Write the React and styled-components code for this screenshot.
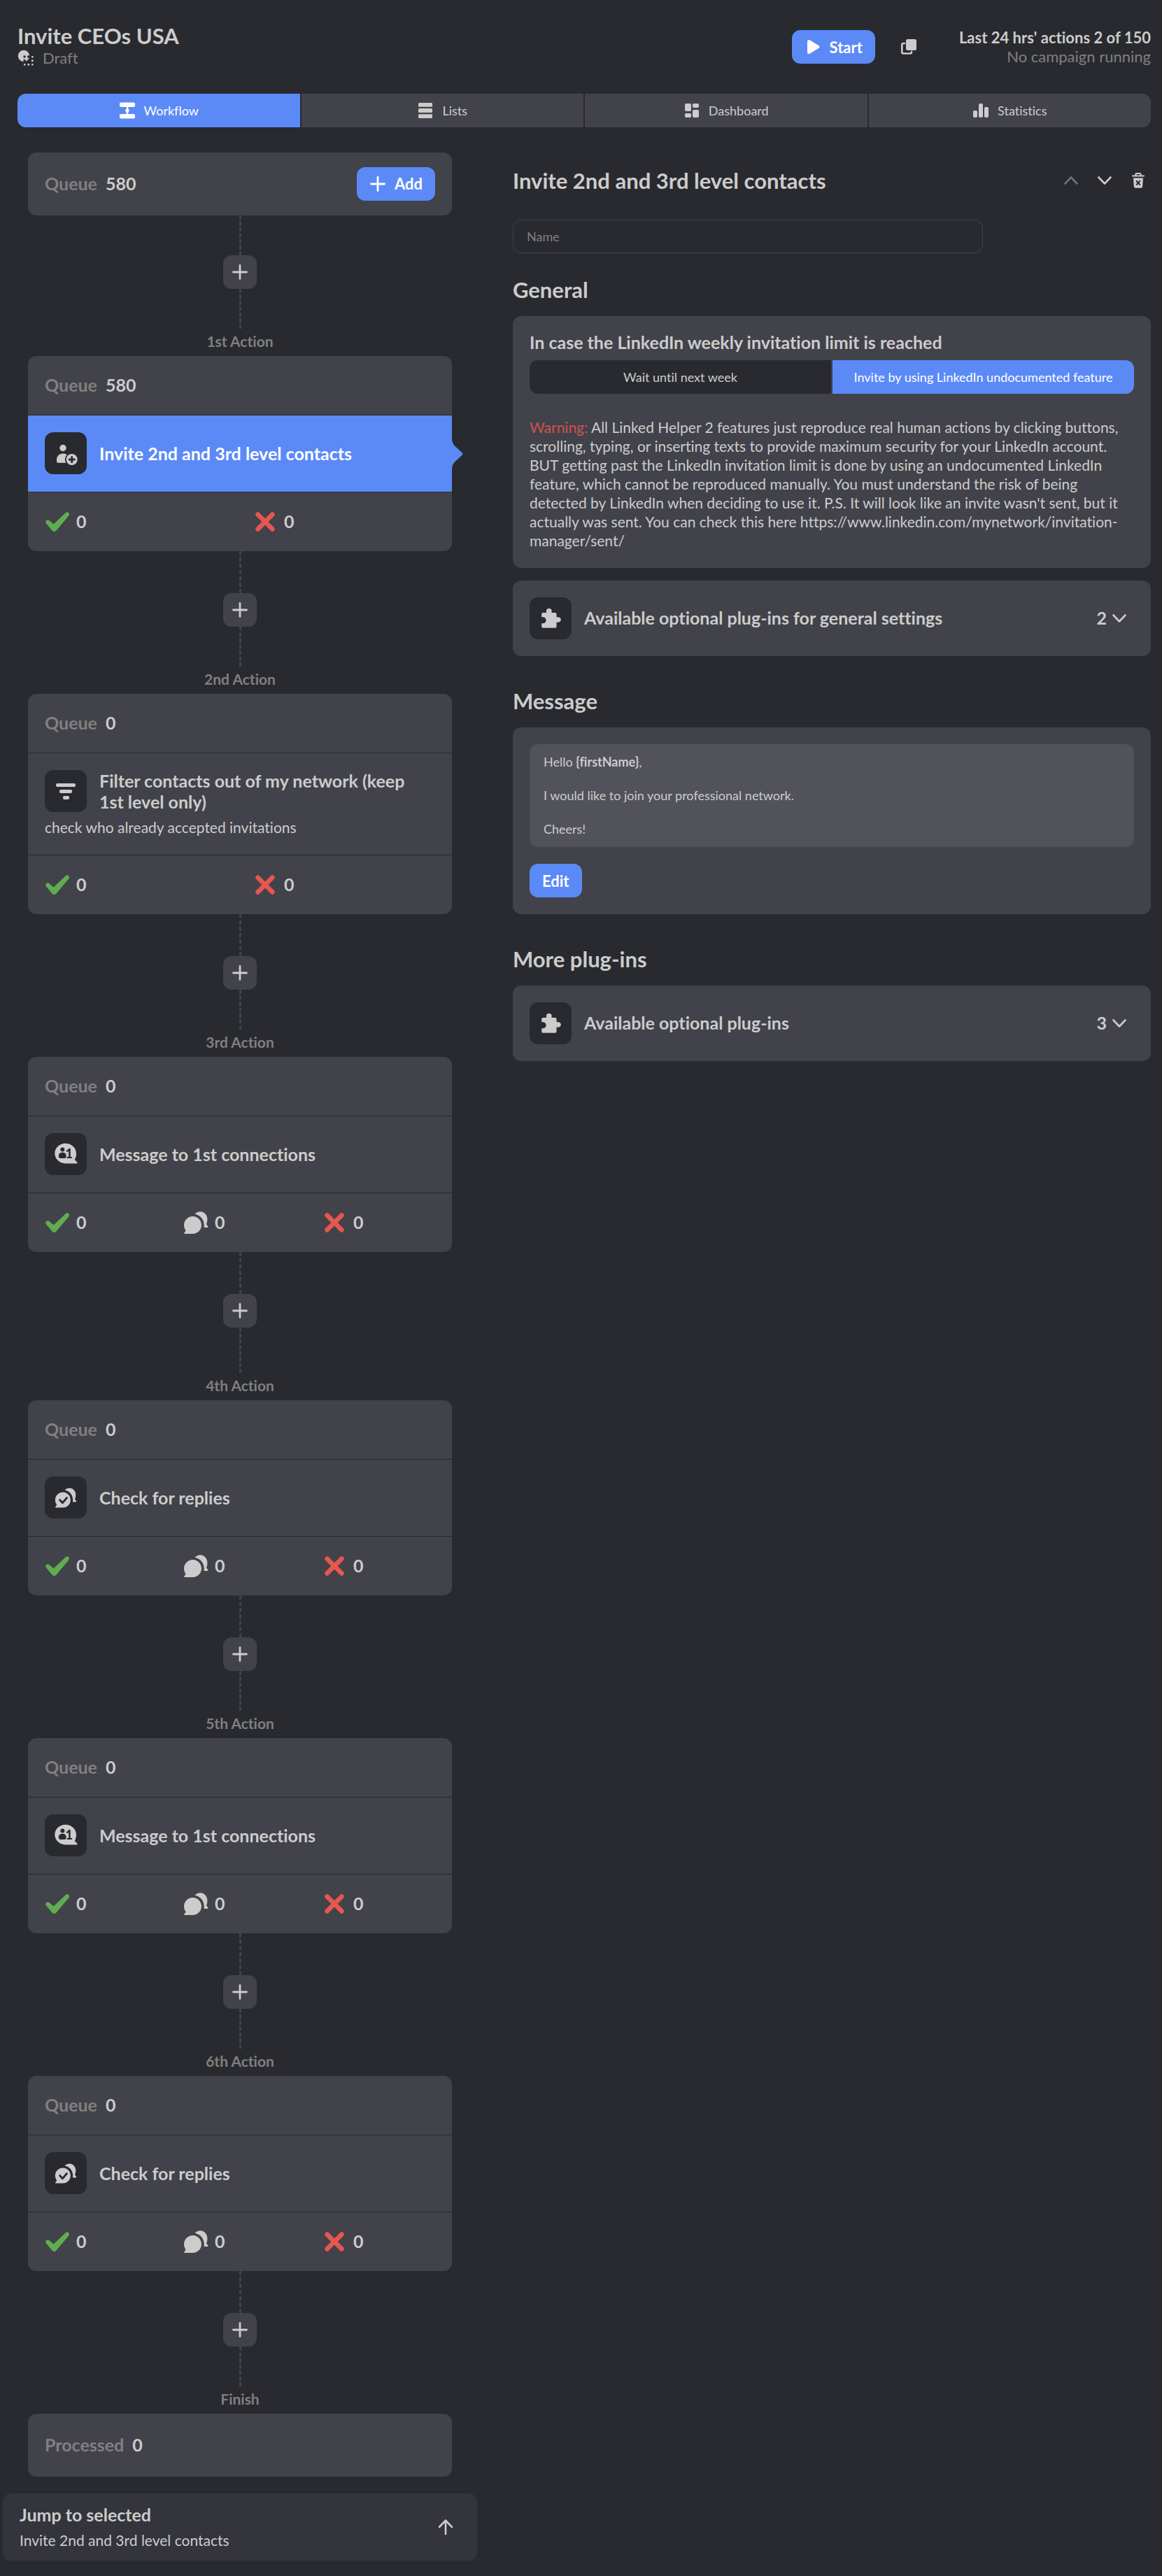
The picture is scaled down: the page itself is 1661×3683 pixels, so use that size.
import React from "react";
import styled, { createGlobalStyle, css } from "styled-components";

const color = {
  page: "#292a2f",
  card: "#42424a",
  field: "#52525b",
  jump: "#34343c",
  text: "#cccccc",
  muted: "#808080",
  accent: "#5b8af7",
  success: "#5fad50",
  danger: "#e5574f",
  warning: "#d0534e",
};

const GlobalStyle = createGlobalStyle`
  *, *::before, *::after { box-sizing: border-box; }
  body {
    margin: 0;
    background: ${color.page};
    color: ${color.text};
    font-family: Lato, "Liberation Sans", sans-serif;
    font-size: 21px;
    font-variant-ligatures: no-common-ligatures;
  }
  button, input { font: inherit; font-variant-ligatures: inherit; color: inherit; }
  h1, h2, h3, p { margin: 0; font-weight: inherit; font-size: inherit; }
  svg { display: block; flex: none; }
`;

const resetButton = css`
  border: 0;
  padding: 0;
  background: none;
  cursor: pointer;
`;

/* ---------- icons ---------- */

const Svg = ({ size = 24, box = size, children }) => (
  <svg width={size} height={size} viewBox={`0 0 ${box} ${box}`} fill="currentColor" aria-hidden="true">
    {children}
  </svg>
);

const strokeProps = { fill: "none", stroke: "currentColor", strokeLinecap: "round", strokeLinejoin: "round" };

const PlusIcon = () => (
  <Svg><path d="M12 2.5v19M2.5 12h19" {...strokeProps} strokeWidth="2.8" /></Svg>
);
const ChevronDown = () => (
  <Svg><path d="M3.5 7.5L12 16.5l8.5-9" {...strokeProps} strokeWidth="2.6" /></Svg>
);
const ChevronUp = () => (
  <Svg><path d="M3.5 16.5L12 7.5l8.5 9" {...strokeProps} strokeWidth="2.6" /></Svg>
);
const ArrowUp = () => (
  <Svg><path d="M12 22V3M3 12l9-9.5 9 9.5" {...strokeProps} strokeWidth="2.6" /></Svg>
);
const PlayIcon = () => (
  <Svg><path d="M4 4.2C4 2.3 5.8 1.3 7.4 2.3L20.5 10.3C21.8 11.2 21.8 12.8 20.5 13.7L7.4 21.7C5.8 22.7 4 21.7 4 19.8Z" /></Svg>
);
const CopyIcon = () => (
  <Svg>
    <rect x="8" y="1" width="15" height="16" rx="2.5" />
    <path d="M6 7H4.2Q2.3 7 2.3 9v10.500q0 2 2 2H14q2 0 2-2V19" {...strokeProps} strokeWidth="2.6" />
  </Svg>
);
const TrashIcon = () => (
  <Svg>
    <path d="M8.5 5V3.200q0-1.200 1.200-1.200h4.600q1.200 0 1.200 1.200V5M4 5.500h16" {...strokeProps} strokeWidth="2.2" />
    <path fillRule="evenodd" d="M5 8.500h14l-.9 12.300q-.2 2-2.200 2H8.100q-2 0-2.200-2ZM9.900 11.500l-1.400 1.400 2.100 2.500-2.100 2.600 1.400 1.300 2.100-2.400 2.100 2.400 1.400-1.300-2.100-2.600 2.100-2.500-1.400-1.400-2.100 2.400Z" />
  </Svg>
);
const WorkflowIcon = () => (
  <Svg>
    <rect x="1" y="0.5" width="22" height="6.5" rx="2" />
    <rect x="1" y="17" width="22" height="6.5" rx="2" />
    <path d="M10.800 6h2.400v3.300L15 12l-1.800 2.700V18h-2.400v-3.300L9 12l1.800-2.700Z" />
  </Svg>
);
const ListsIcon = () => (
  <Svg>
    <rect x="2" y="1" width="20" height="5.8" rx="1.5" />
    <rect x="2" y="9.1" width="20" height="5.8" rx="1.5" />
    <rect x="2" y="17.2" width="20" height="5.8" rx="1.5" />
  </Svg>
);
const DashboardIcon = () => (
  <Svg>
    <rect x="2" y="2" width="9" height="11" rx="2" />
    <rect x="13" y="2" width="9" height="6" rx="2" />
    <rect x="2" y="16" width="9" height="6" rx="2" />
    <rect x="13" y="11" width="9" height="11" rx="2" />
  </Svg>
);
const StatisticsIcon = () => (
  <Svg>
    <rect x="1" y="12" width="6" height="10" rx="2" />
    <rect x="9" y="2" width="6" height="20" rx="2" />
    <rect x="17" y="7" width="6" height="15" rx="2" />
  </Svg>
);
const DraftIcon = () => (
  <Svg>
    <circle cx="9" cy="9" r="8.2" />
    <g fill={color.page}>
      <rect x="8.5" y="8.5" width="3" height="3" />
      <rect x="14" y="8.5" width="3.5" height="3" />
      <rect x="8.5" y="14" width="3" height="3.5" />
    </g>
    <rect x="20" y="9" width="2.6" height="2.6" rx=".8" />
    <rect x="20" y="14.5" width="2.6" height="2.6" />
    <rect x="20" y="20" width="2.6" height="2.6" rx=".8" />
    <rect x="14.5" y="20" width="2.6" height="2.6" />
    <rect x="9" y="20" width="2.6" height="2.6" rx=".8" />
  </Svg>
);
const CheckIcon = () => (
  <Svg size={36}>
    <path fill={color.success} d="M2 16.500Q4.200 14.200 6.500 16.300L12.600 21.500 30 5Q32.200 3.300 34 5 36 7 34.400 9.300L16.300 30.700Q13.500 33.500 10.600 30.700L1.700 20Q.3 18.200 2 16.500Z" />
  </Svg>
);
const CrossIcon = () => (
  <Svg size={36}>
    <path d="M7.600 7.600L28.400 28.400M28.400 7.600L7.600 28.400" fill="none" stroke={color.danger} strokeWidth="6.6" strokeLinecap="round" />
  </Svg>
);
const chatFront = "M13.600 9C20.500 9 26 14.600 26 21.500S20.500 34 13.600 34H2Q.4 34 1.400 32.600L3.600 29.500C2 27.200 1 24.500 1 21.500 1 14.600 6.700 9 13.600 9Z";
const chatBack = "M16.500 5.800C21 .500 30 1.200 33.300 8.200 35 12 34.700 16.500 33 20.300L35.200 23.300Q35.700 24.800 34.500 24.900H29.600C31 15.500 25.500 7.500 16.500 5.800Z";
const ChatsIcon = () => (
  <Svg size={36}><path d={chatFront} /><path d={chatBack} /></Svg>
);

const InviteIcon = () => (
  <Svg size={60}>
    <circle cx="26" cy="22.5" r="4.7" />
    <path d="M17 40C17 34 20.500 30.500 26 30.500 28.300 30.500 30.200 31 31.700 32.200 28.800 35 28 40 30.300 43.800H19.200Q17 43.800 17 41.500Z" />
    <circle cx="38.7" cy="39" r="8" />
    <path d="M38.700 34.300v9.400M34 39h9.400" stroke={color.page} strokeWidth="2.8" />
  </Svg>
);
const FilterIcon = () => (
  <Svg size={60}>
    <rect x="16" y="19" width="28" height="5" rx="2" />
    <rect x="21" y="28" width="18" height="5" rx="2" />
    <rect x="26" y="37" width="9" height="5" rx="2" />
  </Svg>
);
const Digit = styled.text`
  font-family: Lato, sans-serif;
  font-weight: 900;
  font-size: 18px;
`;
const MessageIcon = () => (
  <Svg size={60}>
    <path d="M29.500 14.700C38 14.700 45 21 45 29.200 45 32.500 44.200 35.500 42.700 38L46.600 42Q47 43.300 45.800 43.400H29.500C21 43.400 14.300 37 14.300 29.100S21 14.700 29.500 14.700Z" />
    <g fill={color.page}>
      <circle cx="25.3" cy="23.6" r="3" />
      <path d="M19.800 33C19.800 29.500 22 27.700 25.300 27.700S30.700 29.500 30.700 33Q30.700 36 28 36H22.500Q19.800 36 19.800 33Z" />
      <Digit x="29.5" y="36">1</Digit>
    </g>
  </Svg>
);
const RepliesIcon = () => (
  <Svg size={60}>
    <g transform="translate(14 14.5) scale(.88)"><path d={chatFront} /><path d={chatBack} /></g>
    <path d="M21.500 33.500l4 4.200 6-7.200" {...strokeProps} stroke={color.page} strokeWidth="2.8" />
  </Svg>
);
const PuzzleIcon = () => (
  <Svg size={60}>
    <path d="M19 22H24.200C23.200 17.500 25 16 27.800 16S32.400 17.500 31.400 22H36.500Q38.500 22 38.500 24V28.300C42.500 27.600 44.800 29.500 44.800 32S42.500 36.400 38.500 35.700V41.700Q38.500 43.700 36.500 43.700H19.200Q17.200 43.700 17.200 41.700V37.300C21.500 37.800 23.600 35.500 23.600 32.800S21.500 27.900 17.200 28.400V24Q17.200 22 19 22Z" />
  </Svg>
);

/* ---------- shared parts ---------- */

const PrimaryButton = styled.button`
  ${resetButton}
  display: inline-flex;
  align-items: center;
  gap: 12px;
  height: 48px;
  padding: 0 18px;
  border-radius: 12px;
  background: ${color.accent};
  color: #fff;
  font-size: 22px;
  font-weight: 700;
`;

const IconButton = styled.button`
  ${resetButton}
  display: inline-flex;
  align-items: center;
  justify-content: center;
  width: ${(p) => p.$size || 24}px;
  height: ${(p) => p.$size || 24}px;
  border-radius: 12px;
  background: ${(p) => (p.$filled ? color.card : "transparent")};
  opacity: ${(p) => (p.disabled ? 0.45 : 1)};
`;

const IconTile = styled.span`
  display: block;
  flex: none;
  width: 60px;
  height: 60px;
  border-radius: 12px;
  background: ${color.page};
  color: ${color.text};
`;

/* ---------- header ---------- */

const Page = styled.div`
  display: flex;
  flex-direction: column;
  padding-bottom: 22px;
`;

const Header = styled.header`
  display: flex;
  justify-content: space-between;
  align-items: flex-start;
  padding: 32px 16px 38px 25px;
`;

const CampaignTitle = styled.h1`
  && { font-size: 31px; font-weight: 700; }
  line-height: 38px;
`;

const CampaignStatus = styled.p`
  && { font-size: 22px; }
  display: flex;
  align-items: center;
  gap: 12px;
  line-height: 26px;
`;

const Muted = styled.span`
  color: ${color.muted};
`;

const HeaderActions = styled.div`
  display: flex;
  align-items: center;
  gap: 24px;
  padding-top: 8px;
`;

const Usage = styled.div`
  margin-left: 24px;
  text-align: right;
`;

const UsageLine = styled.p`
  && { font-size: 22px; font-weight: ${(p) => (p.$strong ? 700 : 400)}; }
  line-height: 27px;
  color: ${(p) => (p.$strong ? color.text : color.muted)};
`;

const Tabs = styled.nav`
  display: grid;
  grid-template-columns: repeat(4, 1fr);
  gap: 2px;
  margin: 0 16px 0 25px;
  border-radius: 12px;
  overflow: hidden;
`;

const Tab = styled.button`
  ${resetButton}
  display: flex;
  align-items: center;
  justify-content: center;
  gap: 12px;
  height: 48px;
  font-size: 18px;
  background: ${(p) => (p.$active ? color.accent : color.card)};
  color: ${(p) => (p.$active ? "#fff" : color.text)};
`;

/* ---------- workflow column ---------- */

const Main = styled.main`
  display: grid;
  grid-template-columns: minmax(0, 678px) minmax(0, 1fr);
  column-gap: 51px;
  align-items: start;
  padding: 36px 16px 0 4px;
`;

const Workflow = styled.section`
  display: flex;
  flex-direction: column;
`;

const Steps = styled.div`
  display: flex;
  flex-direction: column;
  padding: 0 36px;
`;

const Card = styled.article`
  border-radius: 12px;
  background: ${color.card};
`;

const CounterRow = styled.div`
  display: flex;
  align-items: center;
  gap: 12px;
  height: ${(p) => (p.$tall ? 90 : 84)}px;
  padding: 0 24px;
  font-size: 25px;
  font-weight: 700;
  line-height: 30px;

  button { margin-left: auto; }
`;

const Count = styled.span`
  padding-bottom: 2px;
`;

const CountLabel = styled(Count)`
  color: ${color.muted};
`;

const ActionRow = styled.div`
  position: relative;
  padding: 24px 24px 25px;
  border-top: 1px solid ${color.page};
  border-bottom: 1px solid ${color.page};
  background: ${(p) => (p.$selected ? color.accent : "transparent")};
  color: ${(p) => (p.$selected ? "#fff" : color.text)};
`;

const ActionHead = styled.div`
  display: flex;
  align-items: center;
  gap: 18px;
  padding-right: 24px;
`;

const ActionTitle = styled.h3`
  && { font-size: 25px; font-weight: 700; }
  line-height: 30px;
`;

const ActionNote = styled.p`
  && { margin-top: 8px; }
  line-height: 28px;
`;

const Pointer = styled.svg`
  position: absolute;
  left: 100%;
  top: calc(50% - 21px);
  color: ${color.accent};
`;

const Results = styled.div`
  display: grid;
  grid-auto-flow: column;
  grid-auto-columns: 1fr;
  column-gap: 36px;
  align-items: center;
  height: 84px;
  padding: 0 24px;
`;

const Result = styled.span`
  display: flex;
  align-items: center;
  gap: 9px;
  font-size: 25px;
  font-weight: 700;
  line-height: 30px;
`;

const ConnectorBox = styled.div`
  display: flex;
  flex-direction: column;
  align-items: center;
`;

const Dashes = styled.span`
  height: ${(p) => p.$length}px;
  border-left: 3px dashed ${color.card};
`;

const StepLabel = styled.p`
  && { font-size: 21px; font-weight: 700; margin: 5px 0 8px; }
  line-height: 26px;
  color: ${color.muted};
`;

const JumpButton = styled.button`
  ${resetButton}
  display: flex;
  align-items: center;
  justify-content: space-between;
  height: 96px;
  margin-top: 24px;
  padding: 0 33px 0 24px;
  border-radius: 12px;
  background: ${color.jump};
  text-align: left;
`;

const JumpText = styled.span`
  display: flex;
  flex-direction: column;
  gap: 8px;
`;

const JumpTitle = styled.strong`
  font-size: 25px;
  line-height: 30px;
`;

const JumpTarget = styled.span`
  font-size: 21px;
  line-height: 28px;
`;

/* ---------- detail column ---------- */

const Detail = styled.section`
  display: flex;
  flex-direction: column;
  padding-top: 21px;
`;

const DetailHead = styled.div`
  display: flex;
  align-items: center;
  justify-content: space-between;
  padding-right: 6px;
`;

const Heading = styled.h2`
  && { font-size: 31px; font-weight: 700; }
  line-height: 38px;
`;

const Tools = styled.div`
  display: flex;
  gap: 24px;
`;

const NameField = styled.input`
  width: 100%;
  max-width: 672px;
  height: 48px;
  margin-top: 37px;
  padding: 0 19px;
  border: 1px solid ${color.card};
  border-radius: 12px;
  background: transparent;
  font-size: 18px;

  &::placeholder { color: ${color.muted}; opacity: 1; }
`;

const Section = styled.section`
  display: flex;
  flex-direction: column;
  margin-top: ${(p) => (p.$first ? 33 : 45)}px;
`;

const Panel = styled.div`
  margin-top: 19px;
  padding: 24px 24px ${(p) => (p.$text ? 26 : 24)}px;
  border-radius: 12px;
  background: ${color.card};
`;

const PanelTitle = styled.h3`
  && { font-size: 25px; font-weight: 700; }
  line-height: 26px;
`;

const Segments = styled.div`
  display: grid;
  grid-template-columns: 1fr 1fr;
  gap: 2px;
  margin-top: 13px;
  border-radius: 12px;
  overflow: hidden;
`;

const Segment = styled.button`
  ${resetButton}
  height: 48px;
  font-size: 18px;
  background: ${(p) => (p.$active ? color.accent : color.page)};
  color: ${(p) => (p.$active ? "#fff" : color.text)};
`;

const WarningText = styled.p`
  && { margin-top: 34px; }
  line-height: 27px;
`;

const WarningMark = styled.span`
  color: ${color.warning};
`;

const PluginBar = styled.button`
  ${resetButton}
  display: flex;
  align-items: center;
  gap: 18px;
  width: 100%;
  height: 108px;
  margin-top: ${(p) => (p.$stacked ? 18 : 19)}px;
  padding: 0 33px 0 24px;
  border-radius: 12px;
  background: ${color.card};
  font-size: 25px;
  font-weight: 700;
`;

const PluginCount = styled.span`
  display: flex;
  align-items: center;
  gap: 6px;
  margin-left: auto;
`;

const MessageBox = styled.div`
  margin-bottom: 24px;
  padding: 13px 20px 14px;
  border-radius: 12px;
  background: ${color.field};
  font-size: 18px;
  line-height: 24px;
  white-space: pre-line;
`;

/* ---------- data ---------- */

const tabs = [
  ["Workflow", WorkflowIcon],
  ["Lists", ListsIcon],
  ["Dashboard", DashboardIcon],
  ["Statistics", StatisticsIcon],
];

const actions = [
  { label: "1st Action", queue: 580, icon: InviteIcon, title: "Invite 2nd and 3rd level contacts", selected: true, before: 57 },
  { label: "2nd Action", queue: 0, icon: FilterIcon, title: "Filter contacts out of my network (keep 1st level only)", note: "check who already accepted invitations" },
  { label: "3rd Action", queue: 0, icon: MessageIcon, title: "Message to 1st connections", replies: true },
  { label: "4th Action", queue: 0, icon: RepliesIcon, title: "Check for replies", replies: true, after: 65 },
  { label: "5th Action", queue: 0, icon: MessageIcon, title: "Message to 1st connections", replies: true },
  { label: "6th Action", queue: 0, icon: RepliesIcon, title: "Check for replies", replies: true },
];

function Connector({ label, before = 60, after = 57 }) {
  return (
    <ConnectorBox>
      <Dashes $length={before} />
      <IconButton $size={48} $filled aria-label="Add action"><PlusIcon /></IconButton>
      <Dashes $length={after} />
      <StepLabel>{label}</StepLabel>
    </ConnectorBox>
  );
}

function ActionCard({ queue, icon: Icon, title, note, selected, replies }) {
  return (
    <Card>
      <CounterRow><CountLabel>Queue</CountLabel><Count>{queue}</Count></CounterRow>
      <ActionRow $selected={selected}>
        <ActionHead>
          <IconTile><Icon /></IconTile>
          <ActionTitle>{title}</ActionTitle>
        </ActionHead>
        {note && <ActionNote>{note}</ActionNote>}
        {selected && (
          <Pointer width="16" height="42" viewBox="0 0 16 42" fill="currentColor" aria-hidden="true">
            <path d="M0 0Q.5 6 4.500 10L14.500 19.300Q16.500 21 14.500 22.700L4.500 32Q.5 36 0 42Z" />
          </Pointer>
        )}
      </ActionRow>
      <Results>
        <Result><CheckIcon /><Count>0</Count></Result>
        {replies && <Result><ChatsIcon /><Count>0</Count></Result>}
        <Result><CrossIcon /><Count>0</Count></Result>
      </Results>
    </Card>
  );
}

function Plugins({ title, count, stacked }) {
  return (
    <PluginBar $stacked={stacked} aria-expanded="false">
      <IconTile><PuzzleIcon /></IconTile>
      <Count>{title}</Count>
      <PluginCount><Count>{count}</Count><ChevronDown /></PluginCount>
    </PluginBar>
  );
}

export default function App() {
  return (
    <Page>
      <GlobalStyle />
      <Header>
        <div>
          <CampaignTitle>Invite CEOs USA</CampaignTitle>
          <CampaignStatus><DraftIcon /><Muted>Draft</Muted></CampaignStatus>
        </div>
        <HeaderActions>
          <PrimaryButton><PlayIcon />Start</PrimaryButton>
          <IconButton $size={48} aria-label="Copy campaign"><CopyIcon /></IconButton>
          <Usage>
            <UsageLine $strong>Last 24 hrs' actions 2 of 150</UsageLine>
            <UsageLine>No campaign running</UsageLine>
          </Usage>
        </HeaderActions>
      </Header>

      <Tabs>
        {tabs.map(([name, Icon], i) => (
          <Tab key={name} $active={i === 0}><Icon />{name}</Tab>
        ))}
      </Tabs>

      <Main>
        <Workflow>
          <Steps>
            <Card>
              <CounterRow $tall>
                <CountLabel>Queue</CountLabel>
                <Count>580</Count>
                <PrimaryButton><PlusIcon />Add</PrimaryButton>
              </CounterRow>
            </Card>
            {actions.map((a) => (
              <React.Fragment key={a.label}>
                <Connector label={a.label} before={a.before} after={a.after} />
                <ActionCard {...a} />
              </React.Fragment>
            ))}
            <Connector label="Finish" />
            <Card>
              <CounterRow $tall><CountLabel>Processed</CountLabel><Count>0</Count></CounterRow>
            </Card>
          </Steps>
          <JumpButton>
            <JumpText>
              <JumpTitle>Jump to selected</JumpTitle>
              <JumpTarget>Invite 2nd and 3rd level contacts</JumpTarget>
            </JumpText>
            <ArrowUp />
          </JumpButton>
        </Workflow>

        <Detail>
          <DetailHead>
            <Heading>Invite 2nd and 3rd level contacts</Heading>
            <Tools>
              <IconButton disabled aria-label="Move up"><ChevronUp /></IconButton>
              <IconButton aria-label="Move down"><ChevronDown /></IconButton>
              <IconButton aria-label="Delete"><TrashIcon /></IconButton>
            </Tools>
          </DetailHead>
          <NameField placeholder="Name" aria-label="Name" />

          <Section $first>
            <Heading>General</Heading>
            <Panel $text>
              <PanelTitle>In case the LinkedIn weekly invitation limit is reached</PanelTitle>
              <Segments>
                <Segment aria-pressed="false">Wait until next week</Segment>
                <Segment $active aria-pressed="true">Invite by using LinkedIn undocumented feature</Segment>
              </Segments>
              <WarningText>
                <WarningMark>Warning:</WarningMark> All Linked Helper 2 features just reproduce real human actions
                by clicking buttons, scrolling, typing, or inserting texts to provide maximum security for your
                LinkedIn account. BUT getting past the LinkedIn invitation limit is done by using an undocumented
                LinkedIn feature, which cannot be reproduced manually. You must understand the risk of being
                detected by LinkedIn when deciding to use it. P.S. It will look like an invite wasn't sent, but it
                actually was sent. You can check this here
                https://www.linkedin.com/mynetwork/invitation-manager/sent/
              </WarningText>
            </Panel>
            <Plugins stacked title="Available optional plug-ins for general settings" count={2} />
          </Section>

          <Section>
            <Heading>Message</Heading>
            <Panel>
              <MessageBox>
                Hello <b>{"{firstName}"}</b>,{"\n\n"}I would like to join your professional network.{"\n\n"}Cheers!
              </MessageBox>
              <PrimaryButton>Edit</PrimaryButton>
            </Panel>
          </Section>

          <Section>
            <Heading>More plug-ins</Heading>
            <Plugins title="Available optional plug-ins" count={3} />
          </Section>
        </Detail>
      </Main>
    </Page>
  );
}
